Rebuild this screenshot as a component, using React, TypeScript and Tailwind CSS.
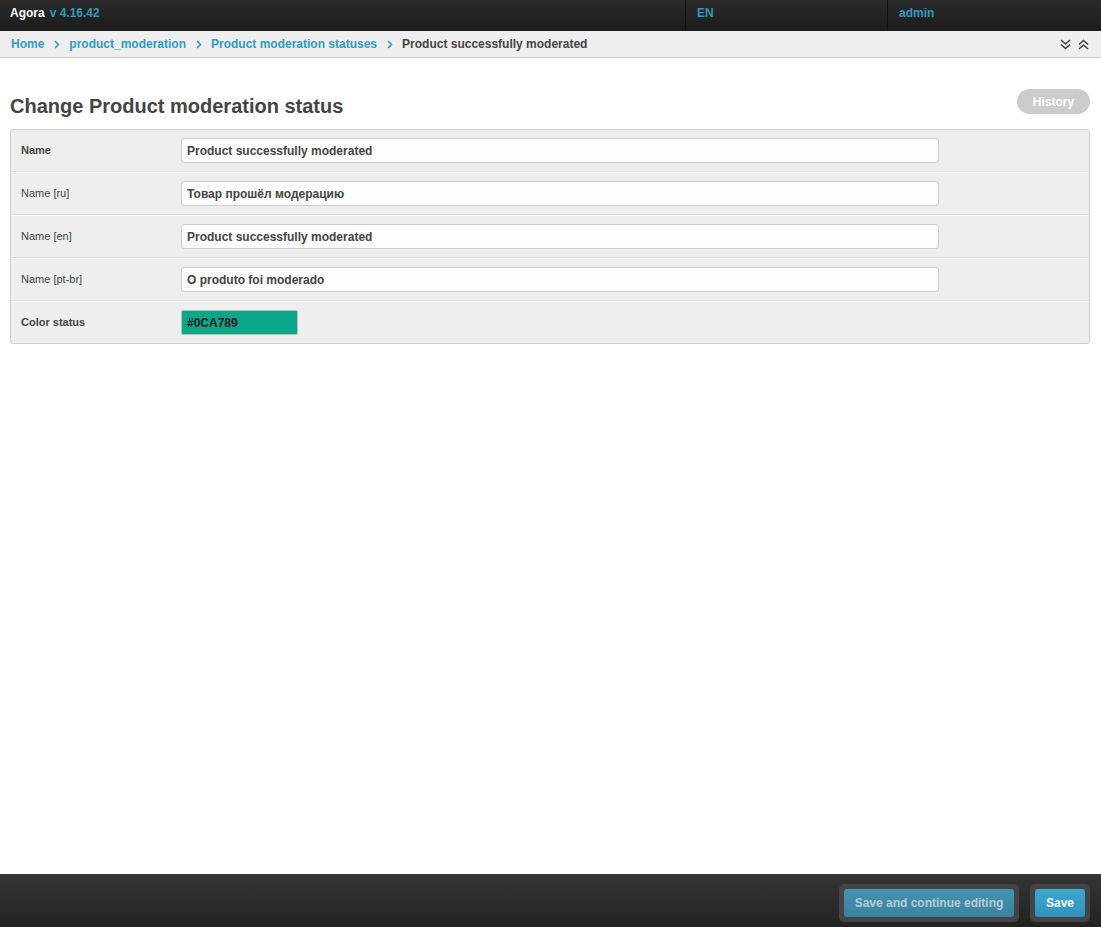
import React from 'react'

const font = { fontFamily: '"Liberation Sans", Arial, sans-serif' }

const rows: { label: string; value: string; bold?: boolean }[] = [
  { label: 'Name', value: 'Product successfully moderated', bold: true },
  { label: 'Name [ru]', value: 'Товар прошёл модерацию' },
  { label: 'Name [en]', value: 'Product successfully moderated' },
  { label: 'Name [pt-br]', value: 'O produto foi moderado' },
]

function Chevron() {
  return (
    <svg width="6" height="9" viewBox="0 0 6 9" className="ml-[10px] mr-[9px] shrink-0">
      <path d="M1 1 L4.5 4.5 L1 8" fill="none" stroke="#309bbf" strokeWidth="1.6" />
    </svg>
  )
}

function DoubleChevron({ up }: { up?: boolean }) {
  return (
    <svg width="11" height="11" viewBox="0 0 11 11" className={up ? 'rotate-180' : ''}>
      <path d="M1 1 L5.5 5 L10 1 M1 5.5 L5.5 9.5 L10 5.5" fill="none" stroke="#444" strokeWidth="1.6" />
    </svg>
  )
}

export default function App() {
  return (
    <div className="flex flex-col min-h-screen w-full bg-white" style={font}>
      {/* Top bar */}
      <header className="flex h-[31px] bg-gradient-to-b from-[#2b2b2b] to-[#1b1b1b] text-[12px] font-bold">
        <div className="flex-1 flex items-center pl-[10px] pb-[5px]">
          <span className="text-white">Agora</span>
          <span className="text-[#309bbf] ml-[5px]">v 4.16.42</span>
        </div>
        <div className="w-[202px] flex items-center pl-[11px] pb-[5px] border-l border-[#111] text-[#309bbf]">EN</div>
        <div className="w-[214px] flex items-center pl-[11px] pb-[5px] border-l border-[#111] text-[#309bbf]">admin</div>
      </header>

      {/* Breadcrumbs */}
      <nav className="flex items-center h-[27px] bg-[#eee] border-b border-[#ccc] pl-[11px] pr-[12px] text-[12px] font-bold">
        <span className="text-[#309bbf]">Home</span>
        <Chevron />
        <span className="text-[#309bbf]">product_moderation</span>
        <Chevron />
        <span className="text-[#309bbf]">Product moderation statuses</span>
        <Chevron />
        <span className="text-[#444]">Product successfully moderated</span>
        <div className="ml-auto flex items-center gap-[7px]">
          <DoubleChevron />
          <DoubleChevron up />
        </div>
      </nav>

      {/* Content */}
      <main className="flex-1 pl-[10px] pr-[11px] pt-[31px]">
        <div className="flex items-start justify-between">
          <h1 className="pt-[5px] text-[20px] leading-[24px] font-bold text-[#444]">
            Change Product moderation status
          </h1>
          <button className="h-[25px] w-[73px] rounded-full bg-[#ccc] text-white text-[12px] font-bold">
            History
          </button>
        </div>

        <div className="mt-[11px] border border-[#ccc] rounded-[3px] bg-[#eee]">
          {rows.map((r, i) => (
            <div
              key={r.label}
              className={`flex items-center border-b border-b-[#ddd] py-[8px] ${i > 0 ? 'border-t border-t-white' : ''}`}
            >
              <div className={`w-[170px] pl-[10px] text-[11px] text-[#444] ${r.bold ? 'font-bold' : ''}`}>{r.label}</div>
              <input
                readOnly
                value={r.value}
                className="w-[758px] h-[25px] px-[5px] border border-[#ccc] rounded-[3px] bg-[#fdfdfd] text-[12px] font-bold text-[#444] outline-none"
                style={font}
              />
            </div>
          ))}
          <div className="flex items-center border-t border-t-white py-[8px]">
            <div className="w-[170px] pl-[10px] text-[11px] font-bold text-[#444]">Color status</div>
            <input
              readOnly
              value="#0CA789"
              className="w-[117px] h-[25px] px-[5px] border border-[#bbb] rounded-[2px] bg-[#0CA789] text-[12px] font-bold text-[#1a1a2a] outline-none"
              style={font}
            />
          </div>
        </div>
      </main>

      {/* Footer */}
      <footer className="h-[53px] flex items-start justify-end gap-[11px] pt-[10px] pr-[11px] bg-gradient-to-b from-[#363636] to-[#222]">
        <div className="p-[5px] rounded-[5px] bg-[#444]">
          <button className="h-[28px] w-[170px] rounded-[3px] bg-gradient-to-b from-[#4494ae] to-[#3a82a0] text-[#b9cbd4] text-[12px] font-bold">
            Save and continue editing
          </button>
        </div>
        <div className="p-[5px] rounded-[5px] bg-[#444]">
          <button className="h-[28px] w-[50px] rounded-[3px] bg-gradient-to-b from-[#3aa8d0] to-[#2f93ba] text-white text-[12px] font-bold">
            Save
          </button>
        </div>
      </footer>
    </div>
  )
}
